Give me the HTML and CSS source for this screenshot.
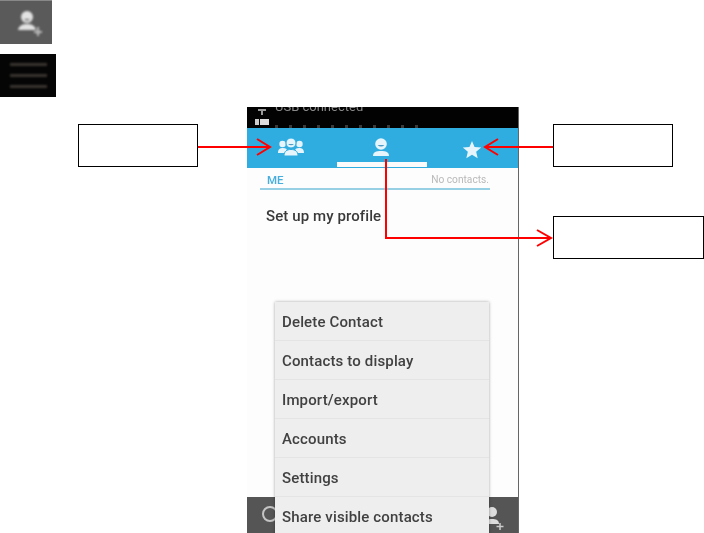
FILE: index.html
```html
<!DOCTYPE html>
<html lang="en">
<head>
<meta charset="utf-8">
<title>Contacts</title>
<link rel="stylesheet" href="styles.css">
</head>
<body>
<main class="figure">
  <div class="key key-add">
    <svg class="soft" width="52" height="44" viewBox="0 0 52 44"><circle cx="27" cy="17" r="6" fill="#e2e2e2"/><path d="M18 30c1-5 5-6 9-6s8 1 9 6z" fill="#e2e2e2"/><path d="M24 19q3 3 6 0z" fill="#666"/><path d="M38 27v9M34 32h8" stroke="#bbb" stroke-width="2"/></svg>
  </div>
  <div class="key key-menu">
    <span class="menu-line"></span><span class="menu-line"></span><span class="menu-line"></span>
  </div>

  <section class="phone">
    <div class="status">
      <svg class="status-icons" width="15" height="19" viewBox="0 0 15 19"><path d="M3 3h8M7 3v5" stroke="#999" stroke-width="2"/><rect x="0" y="12" width="4" height="6" fill="#ccc"/><rect x="5" y="12" width="9" height="6" fill="#ddd"/></svg>
      <div class="status-text">USB connected</div>
      <div class="status-dim"></div>
    </div>
    <div class="tabs">
      <div class="tab tab-group">
        <svg width="26" height="18" viewBox="0 0 26 18" fill="#e6f4fb"><circle cx="4.500" cy="6" r="3.200"/><circle cx="21.500" cy="6" r="3.200"/><path d="M0 15c0-4 2-5 5-5s4 1 4 3v2zM26 15c0-4-2-5-5-5s-4 1-4 3v2z"/><circle cx="13" cy="5" r="5" stroke="#2fade0"/><path d="M6 18c0-5 3-6.500 7-6.500s7 1.500 7 6.500z" stroke="#2fade0"/><path d="M10 6q3 2.500 6 0z" fill="#4a9cc6"/></svg>
      </div>
      <div class="tab tab-active">
        <svg class="person" width="18" height="18" viewBox="0 0 18 18" fill="#e6f4fb"><circle cx="9" cy="6" r="5.800"/><path d="M1 18c0-4 3-5 8-5s8 1 8 5z"/><path d="M5.500 7q3.500 3 7 0z" fill="#4a9cc6"/></svg>
      </div>
      <div class="tab tab-star">
        <svg width="20" height="18" viewBox="0 0 20 19"><path d="M10 0l2.700 6.300 7 .6-5.300 4.500 1.600 6.800L10 14.600 4 18.200l1.600-6.800L.3 6.900l7-.6z" fill="#e6f4fb"/></svg>
      </div>
    </div>
    <div class="content">
      <div class="section-head"><span class="me">ME</span><span class="count">No contacts.</span></div>
      <div class="profile">Set up my profile</div>
    </div>
    <div class="bottom-bar">
      <span class="search-mark"></span>
      <svg class="add-mark" width="20" height="26" viewBox="0 0 20 26"><circle cx="7" cy="7" r="5" fill="#ddd"/><path d="M0 19c0-4 3-5 7-5s7 1 7 5z" fill="#ddd"/><path d="M15 18v7M11.500 21.500h7" stroke="#ccc" stroke-width="1.500"/></svg>
    </div>
    <ul class="menu">
      <li>Delete Contact</li>
      <li>Contacts to display</li>
      <li>Import/export</li>
      <li>Accounts</li>
      <li>Settings</li>
      <li>Share visible contacts</li>
    </ul>
  </section>

  <div class="callout callout-left"></div>
  <div class="callout callout-right"></div>
  <div class="callout callout-wide"></div>

  <svg class="arrows" width="704" height="533" viewBox="0 0 704 533" fill="none" stroke="#f00" stroke-width="2">
    <path d="M198 147h72M257 139l13 8-13 8"/>
    <path d="M553 147h-68M498 139l-13 8 13 8"/>
    <path d="M386 159v79h165M537 230l14 8-14 8"/>
  </svg>
</main>
</body>
</html>
```
FILE: styles.css
```css
* { box-sizing: border-box; }
html, body { margin: 0; padding: 0; background: #fff; overflow: hidden; }
body { font-family: Roboto, "Liberation Sans", sans-serif; }

.figure { position: relative; width: 704px; height: 533px; overflow: hidden; }

.key-add { width: 52px; height: 44px; background: #5a5a5a; border-top: 1px solid #888; }
.key-add svg { display: block; margin-top: -1px; }
.soft { filter: blur(.9px); }
.key-menu {
  width: 56px; height: 43px; margin-top: 10px; background: #050505;
  display: flex; flex-direction: column; justify-content: center; align-items: center; gap: 8px;
}
.menu-line { width: 37px; height: 3px; background: #3a3530; filter: blur(.8px); }

.phone {
  position: relative; width: 272px; height: 426px; margin: 10px 0 0 247px;
  background: #fdfdfd; border-right: 1px solid #666;
  display: flex; flex-direction: column; overflow: hidden;
}
.status {
  height: 21px; background: #020202; flex: none; position: relative; overflow: hidden;
}
.status-icons { position: absolute; left: 8px; top: 0; filter: blur(.5px); }
.status-text { position: absolute; left: 28px; top: -8px; font-size: 13px; line-height: 15px; color: #8a8a8a; filter: blur(.6px); }
.status-dim {
  position: absolute; left: 28px; bottom: 0; width: 150px; height: 3px; filter: blur(.7px);
  background: repeating-linear-gradient(90deg, #3a3a3a 0 3px, transparent 3px 14px);
}

.tabs {
  height: 40px; background: #2fade0; flex: none; display: flex; align-items: flex-start;
  padding-left: 31px; filter: blur(.5px);
}
.tab { display: flex; justify-content: center; padding-top: 10px; }
.tab-group { width: 26px; }
.tab-active { width: 90px; height: 39px; margin-left: 33px; border-bottom: 5px solid #fbfbfb; padding-right: 2px; }
.tab-star { width: 20px; margin-left: 35px; padding-top: 13px; }

.content { flex: 1; padding: 4px 28px 0 13px; filter: blur(.5px); }
.section-head {
  display: flex; justify-content: space-between; align-items: flex-end;
  height: 14px; padding: 0 1px 2px 7px; border-bottom: 2px solid #97cfe4; box-sizing: content-box;
}
.me { font-size: 11.500px; font-weight: 500; color: #46aedc; line-height: 12px; }
.count { font-size: 10.200px; color: #b9b9b9; line-height: 12px; }
.profile { margin: 16px 0 0 6px; font-size: 15px; font-weight: 500; line-height: 20px; color: #3a3a3a; letter-spacing: .1px; }

.bottom-bar {
  position: absolute; left: 0; right: 0; bottom: 0; height: 36px; background: #555;
  filter: blur(.5px);
}
.search-mark {
  position: absolute; left: 15px; top: 9px; width: 16px; height: 16px;
  border: 2px solid #c4c4c4; border-radius: 50%;
}
.add-mark { position: absolute; left: 238px; top: 8px; }

.menu {
  position: absolute; left: 28px; top: 195px; width: 214px; margin: 0; padding: 0; list-style: none;
  background: #eeeeee; box-shadow: 0 0 3px rgba(0,0,0,.35); filter: blur(.5px);
}
.menu li {
  height: 39px; padding: 11px 0 0 7px; font-size: 15px; font-weight: 500; line-height: 18px; color: #414141;
  letter-spacing: .15px; border-bottom: 1px solid #e4e4e4;
}

.callout { position: absolute; background: #fff; border: 1px solid #000; }
.callout-left { left: 78px; top: 124px; width: 120px; height: 43px; }
.callout-right { left: 553px; top: 124px; width: 120px; height: 43px; }
.callout-wide { left: 553px; top: 216px; width: 151px; height: 43px; }

.arrows { position: absolute; left: 0; top: 0; }
```
